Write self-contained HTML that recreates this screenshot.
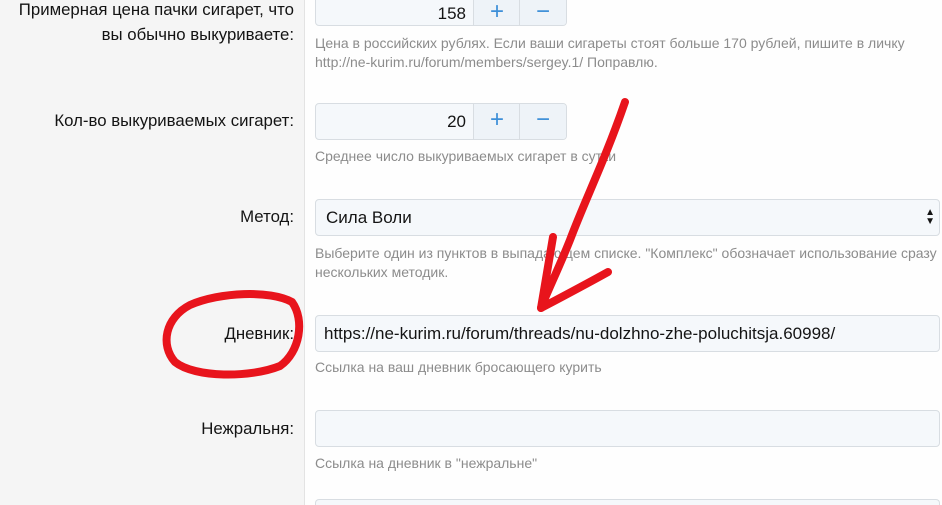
<!DOCTYPE html>
<html style="overflow:hidden;height:505px"><head><meta charset="utf-8"><style>
body{margin:0;width:942px;height:505px;overflow:hidden;background:#fefefe;font-family:"Liberation Sans","DejaVu Sans",sans-serif;position:relative}
.left{position:absolute;left:0;top:0;width:304px;height:505px;background:#f5f5f5;border-right:1px solid #e3e3e3}
.lbl{position:absolute;right:648px;font-size:16.8px;color:#141414;text-align:right;white-space:nowrap}
.inp{position:absolute;left:315px;height:35px;background:#f5f8fb;border:1px solid #d8dde2;border-radius:4px;box-sizing:border-box;font-size:17px;color:#141414;overflow:hidden}
.hint{position:absolute;left:315px;font-size:14px;color:#8c8c8c;line-height:19px;white-space:nowrap}
.num{width:252px}
.num .v{position:absolute;right:100px;top:6px}
.num .b{position:absolute;top:0;bottom:0;width:46px;border-left:1px solid #d8dde2;background:#eef3f8;color:#3d8fd8;font-size:24px;text-align:center;line-height:32px}
</style></head><body>
<div class="left"></div>
<div class="lbl" style="top:-3px;line-height:25px">Примерная цена пачки сигарет, что<br>вы обычно выкуриваете:</div>
<div class="inp num" style="top:-10px;height:36px"><span class="v" style="top:13px">158</span><div class="b" style="right:46px;line-height:42px">+</div><div class="b" style="right:0;line-height:42px">−</div></div>
<div class="hint" style="top:34px">Цена в российских рублях. Если ваши сигареты стоят больше 170 рублей, пишите в личку<br>http://ne-kurim.ru/forum/members/sergey.1/ Поправлю.</div>
<div class="lbl" style="top:111px">Кол-во выкуриваемых сигарет:</div>
<div class="inp num" style="top:103px;height:37px"><span class="v" style="top:8px">20</span><div class="b" style="right:46px">+</div><div class="b" style="right:0">−</div></div>
<div class="hint" style="top:147px">Среднее число выкуриваемых сигарет в сутки</div>
<div class="lbl" style="top:207px">Метод:</div>
<div class="inp" style="top:199px;width:625px;height:37px;padding:8px 10px">Сила Воли<span style="position:absolute;right:4px;top:8px;font-size:10px;line-height:9px">▲<br>▼</span></div>
<div class="hint" style="top:244px">Выберите один из пунктов в выпадающем списке. "Комплекс" обозначает использование сразу<br>нескольких методик.</div>
<div class="lbl" style="top:324px">Дневник:</div>
<div class="inp" style="top:315px;width:625px;height:37px;padding:8px 8px">https://ne-kurim.ru/forum/threads/nu-dolzhno-zhe-poluchitsja.60998/</div>
<div class="hint" style="top:358px">Ссылка на ваш дневник бросающего курить</div>
<div class="lbl" style="top:419px">Нежральня:</div>
<div class="inp" style="top:410px;width:625px;height:37px"></div>
<div class="hint" style="top:454px">Ссылка на дневник в "нежральне"</div>
<div class="inp" style="top:499px;width:625px;height:6px;border-bottom:none;border-radius:4px 4px 0 0"></div>
<svg style="position:absolute;left:0;top:0" width="942" height="505" fill="none" stroke="#e8141c" stroke-width="8" stroke-linecap="round" stroke-linejoin="round">
<path d="M292 302 C270 290 220 292 190 305 C165 318 160 345 175 362 C195 378 250 378 280 366 C300 352 305 320 292 302"/>
<path d="M625 102 C605 160 585 200 570 240 C558 270 548 290 541 308"/>
<path d="M553 237 C549 260 545 285 541 308 C560 298 590 282 608 272"/>
</svg>
</body></html>
